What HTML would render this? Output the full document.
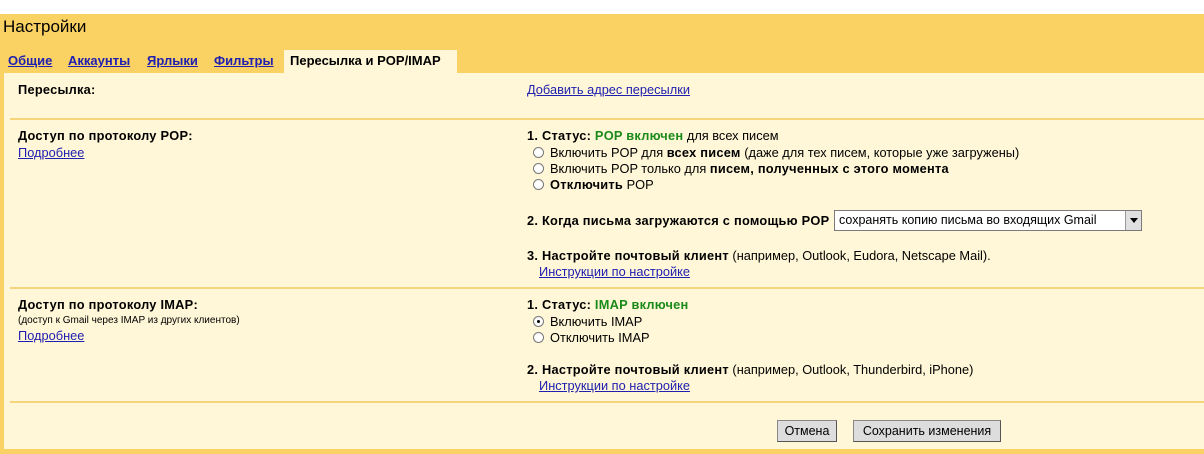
<!DOCTYPE html>
<html><head><meta charset="utf-8"><style>
*{margin:0;padding:0;box-sizing:border-box}
body{width:1204px;height:454px;background:#fff;font-family:"Liberation Sans",Arial,sans-serif;font-size:12.8px;color:#000;position:relative;overflow:hidden}
.hdr{position:absolute;left:0;top:14px;width:1204px;height:440px;background:#FAD163}
.title{position:absolute;left:3px;top:16px;font-size:17px;line-height:22px}
.tab{position:absolute;top:53px;font-size:13px;font-weight:bold;color:#2020b0;text-decoration:underline}
.atab{position:absolute;left:284px;top:50px;width:173px;height:24px;background:#FFF7D7;font-size:13px;font-weight:bold;padding:3px 0 0 6px}
.panel{position:absolute;left:4px;top:73px;width:1200px;height:376px;background:#FFF7D7}
.sep{position:absolute;left:10px;width:1194px;height:2px;background:#F6D57A}
.a{position:absolute;white-space:nowrap;line-height:16px}
a{color:#2020b0;text-decoration:underline}
b{font-weight:bold;letter-spacing:0.25px}
.g{color:#1a8a1a;font-weight:bold;letter-spacing:0.25px}
.r{display:inline-block;width:11px;height:11px;border-radius:50%;border:1px solid #777;background:#fff;vertical-align:-1px;margin-right:6px;position:relative}
.r.on:after{content:"";position:absolute;left:3px;top:3px;width:3px;height:3px;border-radius:50%;background:#000}
.sel{position:absolute;left:834px;top:210px;width:308px;height:21px;background:#fff;border:1px solid #7a7a7a;font-size:12.5px;padding:2px 4px;white-space:nowrap}
.arr{position:absolute;right:0;top:0;width:16px;height:19px;background:#e0e0e0;border-left:1px solid #999}
.arr:after{content:"";position:absolute;left:4px;top:7px;border-left:4px solid transparent;border-right:4px solid transparent;border-top:5px solid #000}
.btn{position:absolute;top:420px;height:22px;background:#ddd;border:1px solid #888;border-right-color:#555;border-bottom-color:#555;font-size:12.5px;text-align:center;line-height:20px}
</style></head><body>
<div class="hdr"></div>
<div class="title">Настройки</div>
<div class="tab" style="left:8px">Общие</div>
<div class="tab" style="left:68px">Аккаунты</div>
<div class="tab" style="left:147px">Ярлыки</div>
<div class="tab" style="left:214px">Фильтры</div>
<div class="atab">Пересылка и POP/IMAP</div>
<div class="panel"></div>
<div class="sep" style="top:118px"></div>
<div class="sep" style="top:287px"></div>
<div class="sep" style="top:401px"></div>

<div class="a" style="left:18px;top:82px"><b>Пересылка:</b></div>
<div class="a" style="left:527px;top:82px"><a>Добавить адрес пересылки</a></div>

<div class="a" style="left:18px;top:128px"><b>Доступ по протоколу POP:</b></div>
<div class="a" style="left:18px;top:145px"><a>Подробнее</a></div>
<div class="a" style="left:527px;top:128px"><b>1. Статус: </b><span class="g">POP включен</span> для всех писем</div>
<div class="a" style="left:533px;top:145px"><span class="r"></span>Включить POP для <b>всех писем</b> (даже для тех писем, которые уже загружены)</div>
<div class="a" style="left:533px;top:161px"><span class="r"></span>Включить POP только для <b>писем, полученных с этого момента</b></div>
<div class="a" style="left:533px;top:177px"><span class="r"></span><b>Отключить</b> POP</div>
<div class="a" style="left:527px;top:213px"><b>2. Когда письма загружаются с помощью POP</b></div>
<div class="sel">сохранять копию письма во входящих Gmail<div class="arr"></div></div>
<div class="a" style="left:527px;top:248px"><b>3. Настройте почтовый клиент</b> (например, Outlook, Eudora, Netscape Mail).</div>
<div class="a" style="left:539px;top:264px"><a>Инструкции по настройке</a></div>

<div class="a" style="left:18px;top:297px"><b>Доступ по протоколу IMAP:</b></div>
<div class="a" style="left:18px;top:313px;font-size:10px">(доступ к Gmail через IMAP из других клиентов)</div>
<div class="a" style="left:18px;top:328px"><a>Подробнее</a></div>
<div class="a" style="left:527px;top:297px"><b>1. Статус: </b><span class="g">IMAP включен</span></div>
<div class="a" style="left:533px;top:314px"><span class="r on"></span>Включить IMAP</div>
<div class="a" style="left:533px;top:330px"><span class="r"></span>Отключить IMAP</div>
<div class="a" style="left:527px;top:362px"><b>2. Настройте почтовый клиент</b> (например, Outlook, Thunderbird, iPhone)</div>
<div class="a" style="left:539px;top:378px"><a>Инструкции по настройке</a></div>

<div class="btn" style="left:777px;width:60px">Отмена</div>
<div class="btn" style="left:853px;width:148px">Сохранить изменения</div>
</body></html>
